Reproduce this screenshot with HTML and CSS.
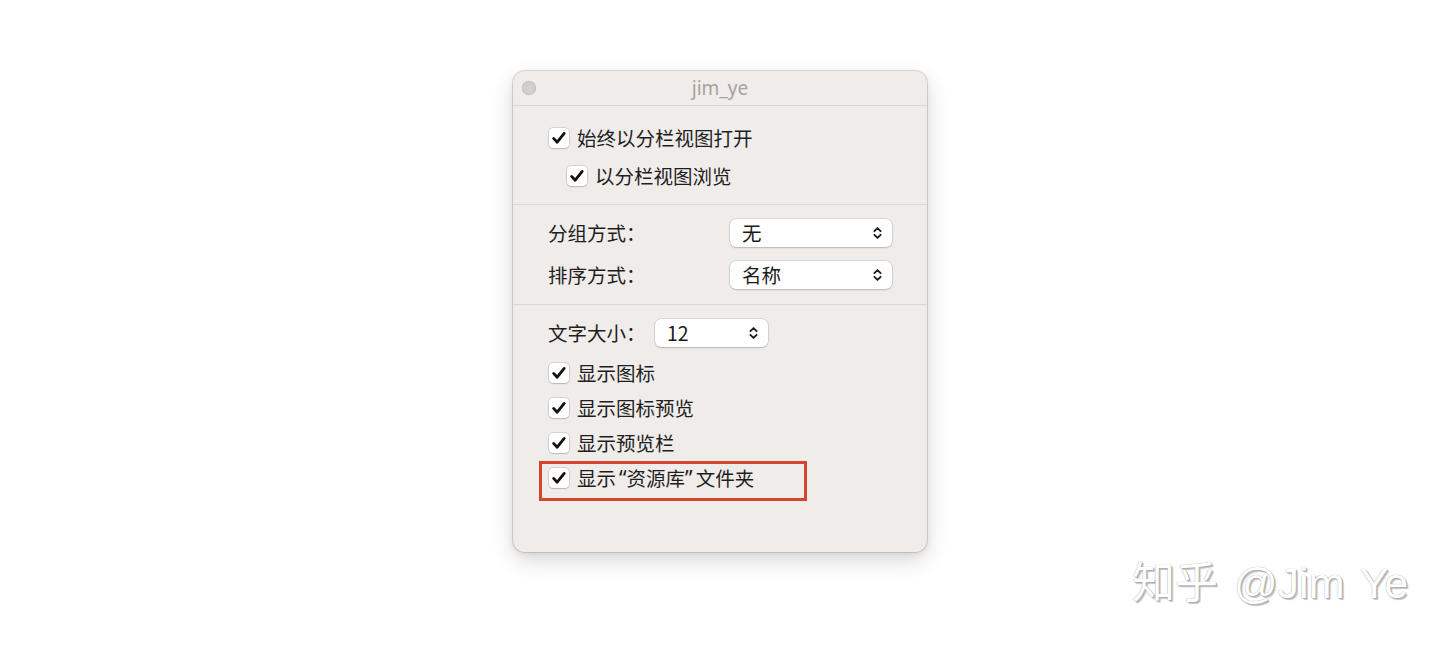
FILE: index.html
```html
<!DOCTYPE html>
<html lang="zh-CN">
<head>
<meta charset="utf-8">
<title>jim_ye</title>
<link rel="stylesheet" href="styles.css">
</head>
<body>
<div class="stage">
  <div class="window">
    <div class="titlebar">
      <div class="tb-left"><span class="close-btn"></span></div>
      <div class="title">jim_ye</div>
      <div class="tb-right"></div>
    </div>

    <div class="section section-top">
      <div class="check-row">
        <span class="checkbox"><svg viewBox="0 0 20 20" width="20" height="20"><path d="M4.6 10.4 L8.2 14.2 L15.2 5.4" fill="none" stroke="#111" stroke-width="2.8" stroke-linecap="round" stroke-linejoin="round"/></svg></span>
        <span class="label">始终以分栏视图打开</span>
      </div>
      <div class="check-row indent">
        <span class="checkbox"><svg viewBox="0 0 20 20" width="20" height="20"><path d="M4.6 10.4 L8.2 14.2 L15.2 5.4" fill="none" stroke="#111" stroke-width="2.8" stroke-linecap="round" stroke-linejoin="round"/></svg></span>
        <span class="label">以分栏视图浏览</span>
      </div>
    </div>

    <div class="section section-mid">
      <div class="field-row">
        <span class="field-label wide">分组方式：</span>
        <div class="select select-wide"><span>无</span><svg class="arrows" viewBox="0 0 9 14" width="9" height="14"><path d="M1.4 5.2 L4.5 2.1 L7.6 5.2 M1.4 8.8 L4.5 11.9 L7.6 8.8" fill="none" stroke="#1f1f1f" stroke-width="1.9" stroke-linecap="round" stroke-linejoin="round"/></svg></div>
      </div>
      <div class="field-row">
        <span class="field-label wide">排序方式：</span>
        <div class="select select-wide"><span>名称</span><svg class="arrows" viewBox="0 0 9 14" width="9" height="14"><path d="M1.4 5.2 L4.5 2.1 L7.6 5.2 M1.4 8.8 L4.5 11.9 L7.6 8.8" fill="none" stroke="#1f1f1f" stroke-width="1.9" stroke-linecap="round" stroke-linejoin="round"/></svg></div>
      </div>
    </div>

    <div class="section section-bottom">
      <div class="field-row">
        <span class="field-label narrow">文字大小：</span>
        <div class="select select-narrow"><span>12</span><svg class="arrows" viewBox="0 0 9 14" width="9" height="14"><path d="M1.4 5.2 L4.5 2.1 L7.6 5.2 M1.4 8.8 L4.5 11.9 L7.6 8.8" fill="none" stroke="#1f1f1f" stroke-width="1.9" stroke-linecap="round" stroke-linejoin="round"/></svg></div>
      </div>
      <div class="check-list">
        <div class="check-row">
          <span class="checkbox"><svg viewBox="0 0 20 20" width="20" height="20"><path d="M4.6 10.4 L8.2 14.2 L15.2 5.4" fill="none" stroke="#111" stroke-width="2.8" stroke-linecap="round" stroke-linejoin="round"/></svg></span>
          <span class="label">显示图标</span>
        </div>
        <div class="check-row">
          <span class="checkbox"><svg viewBox="0 0 20 20" width="20" height="20"><path d="M4.6 10.4 L8.2 14.2 L15.2 5.4" fill="none" stroke="#111" stroke-width="2.8" stroke-linecap="round" stroke-linejoin="round"/></svg></span>
          <span class="label">显示图标预览</span>
        </div>
        <div class="check-row">
          <span class="checkbox"><svg viewBox="0 0 20 20" width="20" height="20"><path d="M4.6 10.4 L8.2 14.2 L15.2 5.4" fill="none" stroke="#111" stroke-width="2.8" stroke-linecap="round" stroke-linejoin="round"/></svg></span>
          <span class="label">显示预览栏</span>
        </div>
        <div class="check-row highlighted">
          <span class="checkbox"><svg viewBox="0 0 20 20" width="20" height="20"><path d="M4.6 10.4 L8.2 14.2 L15.2 5.4" fill="none" stroke="#111" stroke-width="2.8" stroke-linecap="round" stroke-linejoin="round"/></svg></span>
          <span class="label">显示<span class="quote open">“</span>资源库<span class="quote close">”</span>文件夹</span>
        </div>
      </div>
    </div>
  </div>

  <div class="watermark">知乎 @Jim Ye</div>
</div>
</body>
</html>
```

FILE: styles.css
```css
html, body {
  margin: 0;
  padding: 0;
  background: #ffffff;
}

body {
  font-family: "Noto Sans CJK SC", "Noto Sans", sans-serif;
  color: #1e1e1e;
}

.stage {
  position: relative;
  width: 1440px;
  height: 645px;
  box-sizing: border-box;
  padding-top: 71px;
  display: flex;
  justify-content: center;
  align-items: flex-start;
}

.window {
  width: 414px;
  height: 481px;
  background: #f0ecea;
  border-radius: 12px;
  box-shadow: 0 0 0 1px rgba(0, 0, 0, 0.13), 0 8px 22px rgba(0, 0, 0, 0.16), 0 2px 6px rgba(0, 0, 0, 0.06);
  display: flex;
  flex-direction: column;
  overflow: hidden;
}

.titlebar {
  height: 34px;
  border-bottom: 1px solid #d8d4d3;
  display: grid;
  grid-template-columns: 1fr auto 1fr;
  align-items: center;
  flex: none;
}

.tb-left {
  display: flex;
  align-items: center;
  padding-left: 9px;
}

.close-btn {
  width: 14px;
  height: 14px;
  border-radius: 50%;
  background: #d4d0cf;
  box-shadow: inset 0 0 0 1px #c3bfbe;
}

.title {
  font-family: "Noto Sans", "Liberation Sans", sans-serif;
  font-size: 19px;
  line-height: 34px;
  color: #a6a2a1;
}

.section {
  flex: none;
}

.section-top {
  padding: 18px 0 14px 35px;
  display: flex;
  flex-direction: column;
  gap: 10px;
}

.section-mid {
  border-top: 1px solid #dad6d5;
  padding: 14px 0 15px 35px;
  display: flex;
  flex-direction: column;
  gap: 14px;
}

.section-bottom {
  border-top: 1px solid #dad6d5;
  padding: 14px 0 0 35px;
  display: flex;
  flex-direction: column;
  gap: 12px;
}

.check-list {
  display: flex;
  flex-direction: column;
  gap: 7px;
}

.check-row {
  height: 28px;
  display: flex;
  align-items: center;
  gap: 8px;
}

.check-row.indent {
  margin-left: 18px;
}

.checkbox {
  width: 20px;
  height: 20px;
  margin-left: 1px;
  box-sizing: border-box;
  background: #ffffff;
  border-radius: 4px;
  box-shadow: 0 0 0 0.5px rgba(0, 0, 0, 0.22), 0 1px 1.5px rgba(0, 0, 0, 0.12);
  display: flex;
  flex: none;
}

.label,
.field-label {
  font-size: 19.5px;
  line-height: 28px;
  white-space: nowrap;
}

.quote {
  font-family: "Noto Sans", "Liberation Sans", sans-serif;
  font-size: 21px;
}

.quote.open {
  padding-left: 3px;
}

.quote.close {
  padding-right: 3px;
}

.field-row {
  display: flex;
  align-items: center;
  height: 28px;
}

.field-label.wide {
  width: 182px;
}

.field-label.narrow {
  width: 107px;
}

.select {
  height: 28px;
  box-sizing: border-box;
  background: #ffffff;
  border-radius: 6px;
  box-shadow: 0 0 0 0.5px rgba(0, 0, 0, 0.16), 0 1px 2px rgba(0, 0, 0, 0.16);
  display: flex;
  align-items: center;
  justify-content: space-between;
  padding: 0 10px 0 12px;
  font-size: 19.5px;
  line-height: 28px;
  color: #1a1a1a;
}

.select-wide {
  width: 162px;
}

.select-narrow {
  width: 113px;
}

.arrows {
  flex: none;
}

.highlighted {
  position: relative;
}

.highlighted::after {
  content: "";
  position: absolute;
  left: -9px;
  top: -3px;
  width: 268px;
  height: 40px;
  box-sizing: border-box;
  border: 3px solid #d8432d;
}

.watermark {
  position: absolute;
  left: 1132px;
  top: 555px;
  font-family: "Liberation Sans", "Noto Sans CJK SC", sans-serif;
  font-size: 43px;
  line-height: 56px;
  word-spacing: 4px;
  color: #ffffff;
  text-shadow: 0 0 1px #8e8e8e, 1px 1px 0 #b5b5b5, 2px 2px 1px #c4c4c4;
  white-space: nowrap;
}
```
